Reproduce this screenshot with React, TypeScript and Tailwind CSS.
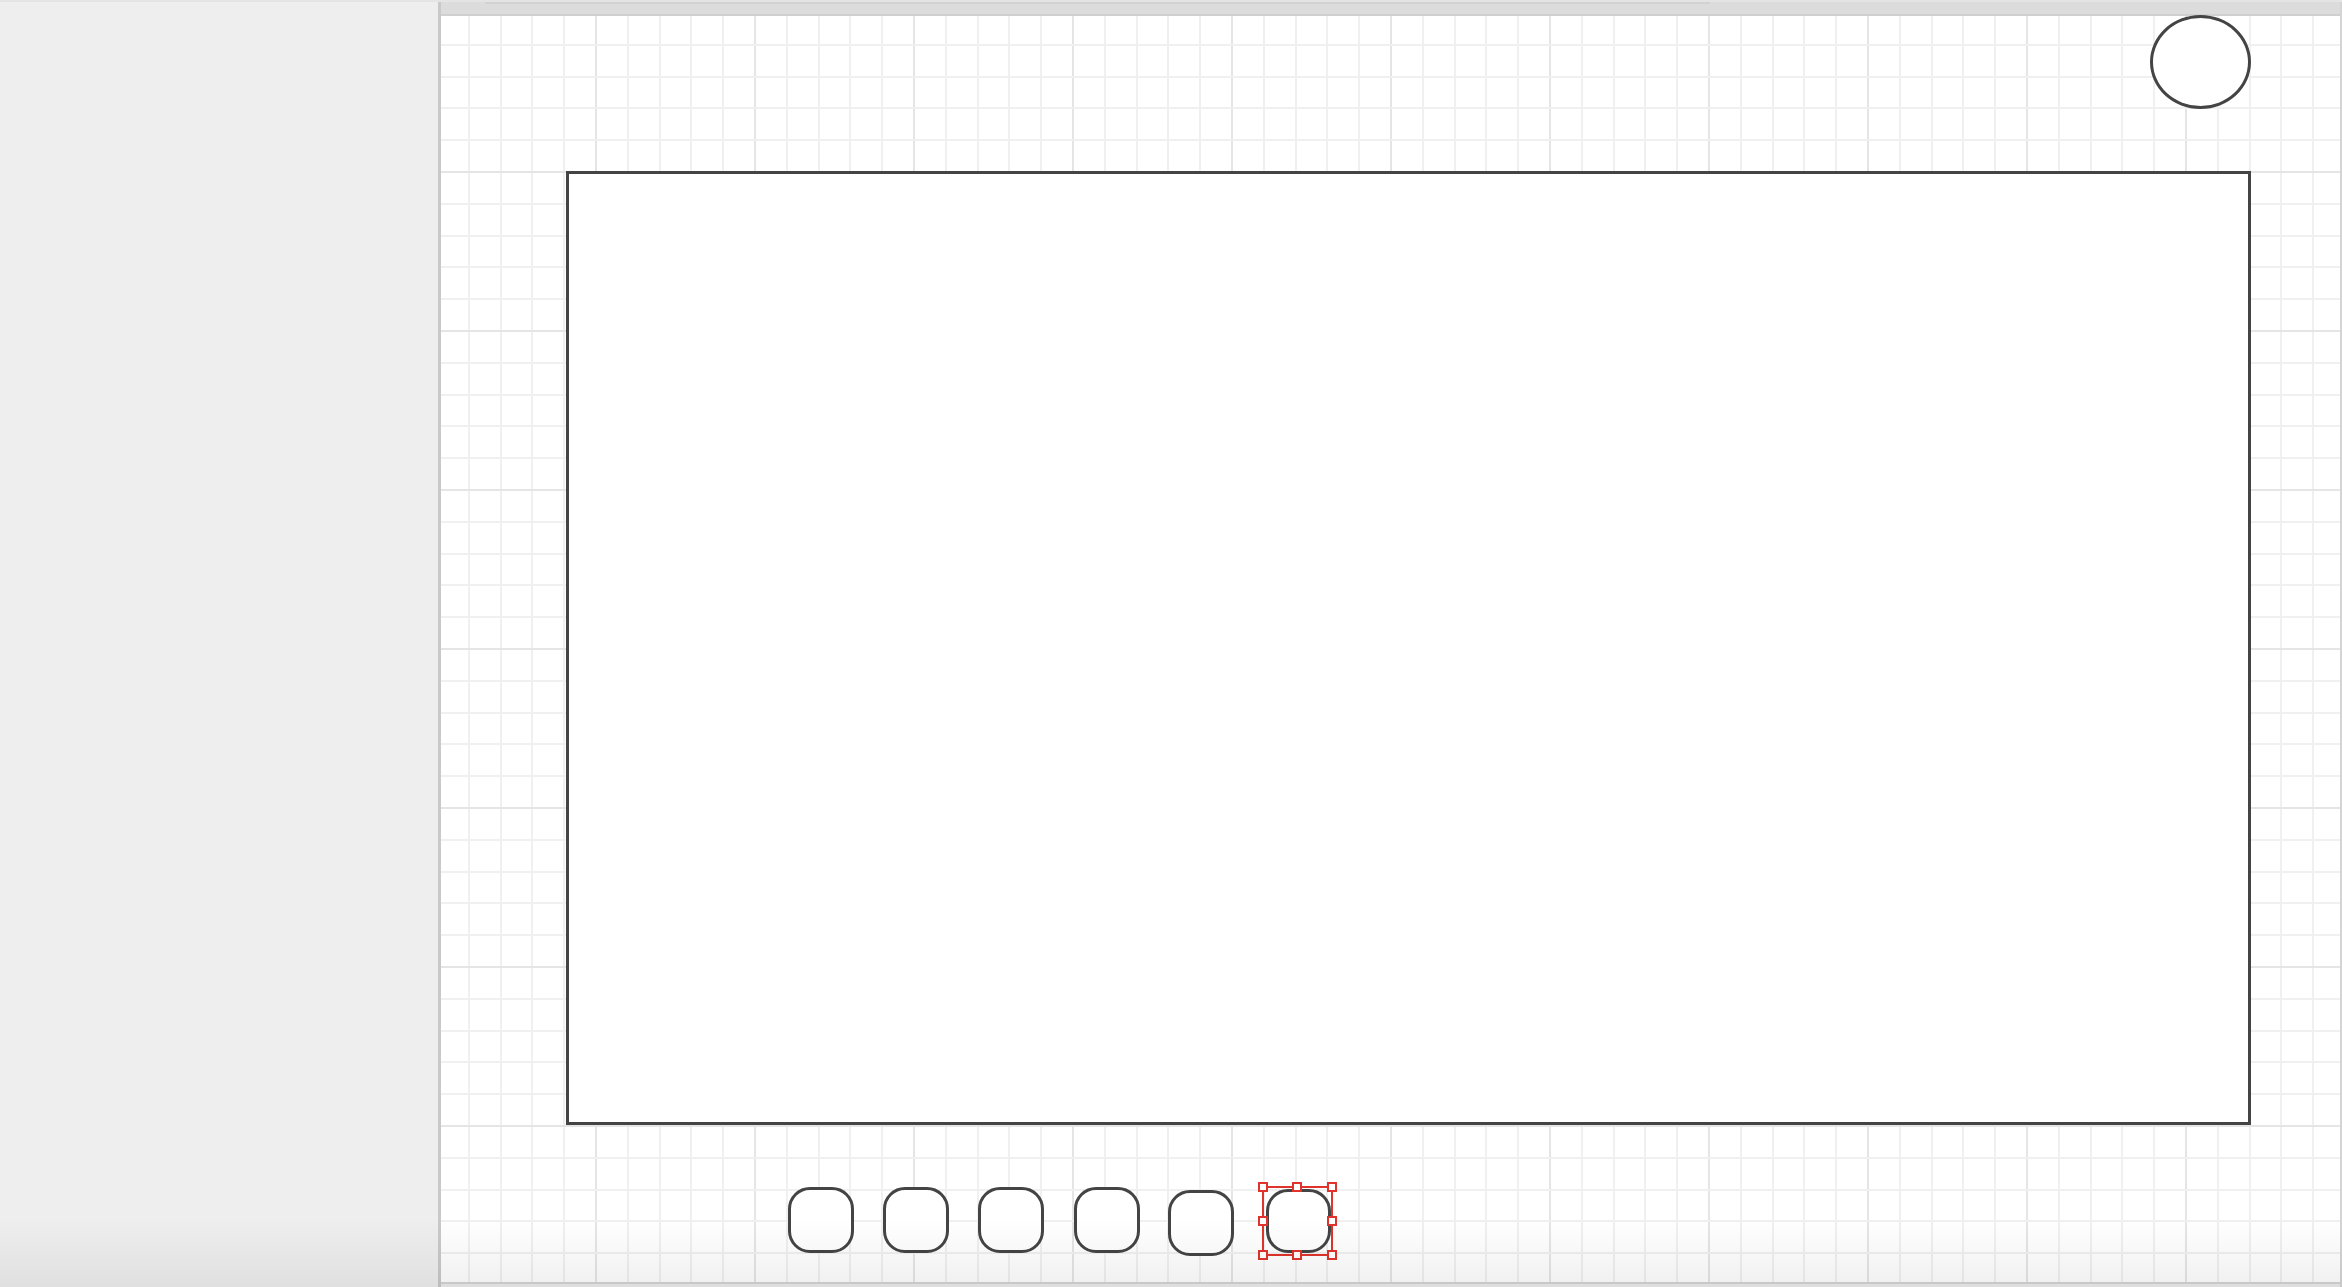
import React from 'react'

// canvas nodes sit at their place on the board, so they are placed absolutely
const keys = [
  { left: 347, top: 1171, w: 66, h: 66 },
  { left: 442, top: 1171, w: 66, h: 66 },
  { left: 537, top: 1171, w: 66, h: 66 },
  { left: 633, top: 1171, w: 66, h: 66 },
  { left: 727, top: 1174, w: 66, h: 66 },
]

const Handle = ({ className }: { className: string }) => (
  <div className={`absolute w-[10px] h-[10px] bg-white border-2 border-[#e0332b] ${className}`} />
)

const App = () => {
  return (
    <div className="relative w-[2342px] h-[1287px] overflow-hidden flex flex-col bg-[#eeeeee] border-t-2 border-[#e4e4e4]">
      <div className="flex-1 flex min-h-0">
        {/* left panel */}
        <aside className="w-[438px] shrink-0 bg-[#eeeeee]" />

        {/* drawing board */}
        <main className="flex-1 flex flex-col min-w-0 border-l-[3px] border-l-[#c9c9c9] border-r-2 border-r-[#d4d4d4]">
          {/* top strip with scroll thumb */}
          <div className="h-[12px] shrink-0 bg-[#dcdcdc] pl-[44px]">
            <div className="w-[1225px] h-[2px] bg-[#d2d2d2]" />
          </div>

          <div className="relative flex-1 min-h-0 bg-white border-t-2 border-t-[#d0d0d0] border-b-2 border-b-[#d4d4d4] [background-size:159px_159px] [background-position:154px_155px] [background-image:linear-gradient(to_bottom,#e5e5e5_0_2px,transparent_2px_31.8px,#f0f0f0_31.8px_33.8px,transparent_33.8px_63.6px,#f0f0f0_63.6px_65.6px,transparent_65.6px_95.4px,#f0f0f0_95.4px_97.4px,transparent_97.4px_127.2px,#f0f0f0_127.2px_129.2px,transparent_129.2px),linear-gradient(to_right,#e5e5e5_0_2px,transparent_2px_31.8px,#f0f0f0_31.8px_33.8px,transparent_33.8px_63.6px,#f0f0f0_63.6px_65.6px,transparent_65.6px_95.4px,#f0f0f0_95.4px_97.4px,transparent_97.4px_127.2px,#f0f0f0_127.2px_129.2px,transparent_129.2px)]">
            {/* ellipse */}
            <div className="absolute left-[1709px] top-[-1px] w-[101px] h-[94px] rounded-[50%] bg-white border-[3px] border-[#444444]" />

            {/* big rectangle */}
            <div className="absolute left-[125px] top-[155px] w-[1685px] h-[954px] bg-white border-[3px] border-[#444444]" />

            {/* rounded keys */}
            {keys.map((k, i) => (
              <div
                key={i}
                className="absolute rounded-[22px] bg-white border-[3px] border-[#444444]"
                style={{ left: k.left, top: k.top, width: k.w, height: k.h }}
              />
            ))}

            {/* selected key */}
            <div className="absolute left-[825px] top-[1173px] w-[65px] h-[64px] rounded-[22px] bg-white border-[3px] border-[#444444]" />
            <div className="absolute left-[821px] top-[1170px] w-[71px] h-[70px] border-2 border-[#e0332b]">
              <Handle className="left-[-6px] top-[-6px]" />
              <Handle className="left-[28px] top-[-6px]" />
              <Handle className="right-[-6px] top-[-6px]" />
              <Handle className="left-[-6px] top-[28px]" />
              <Handle className="right-[-6px] top-[28px]" />
              <Handle className="left-[-6px] bottom-[-6px]" />
              <Handle className="left-[28px] bottom-[-6px]" />
              <Handle className="right-[-6px] bottom-[-6px]" />
            </div>
          </div>

          <div className="h-[3px] shrink-0 bg-[#ececec]" />
        </main>
      </div>

      {/* soft shade along the bottom of the window */}
      <div className="pointer-events-none absolute inset-x-0 bottom-0 h-[68px] bg-linear-to-b from-transparent to-black/[0.06]" />
    </div>
  )
}

export default App
